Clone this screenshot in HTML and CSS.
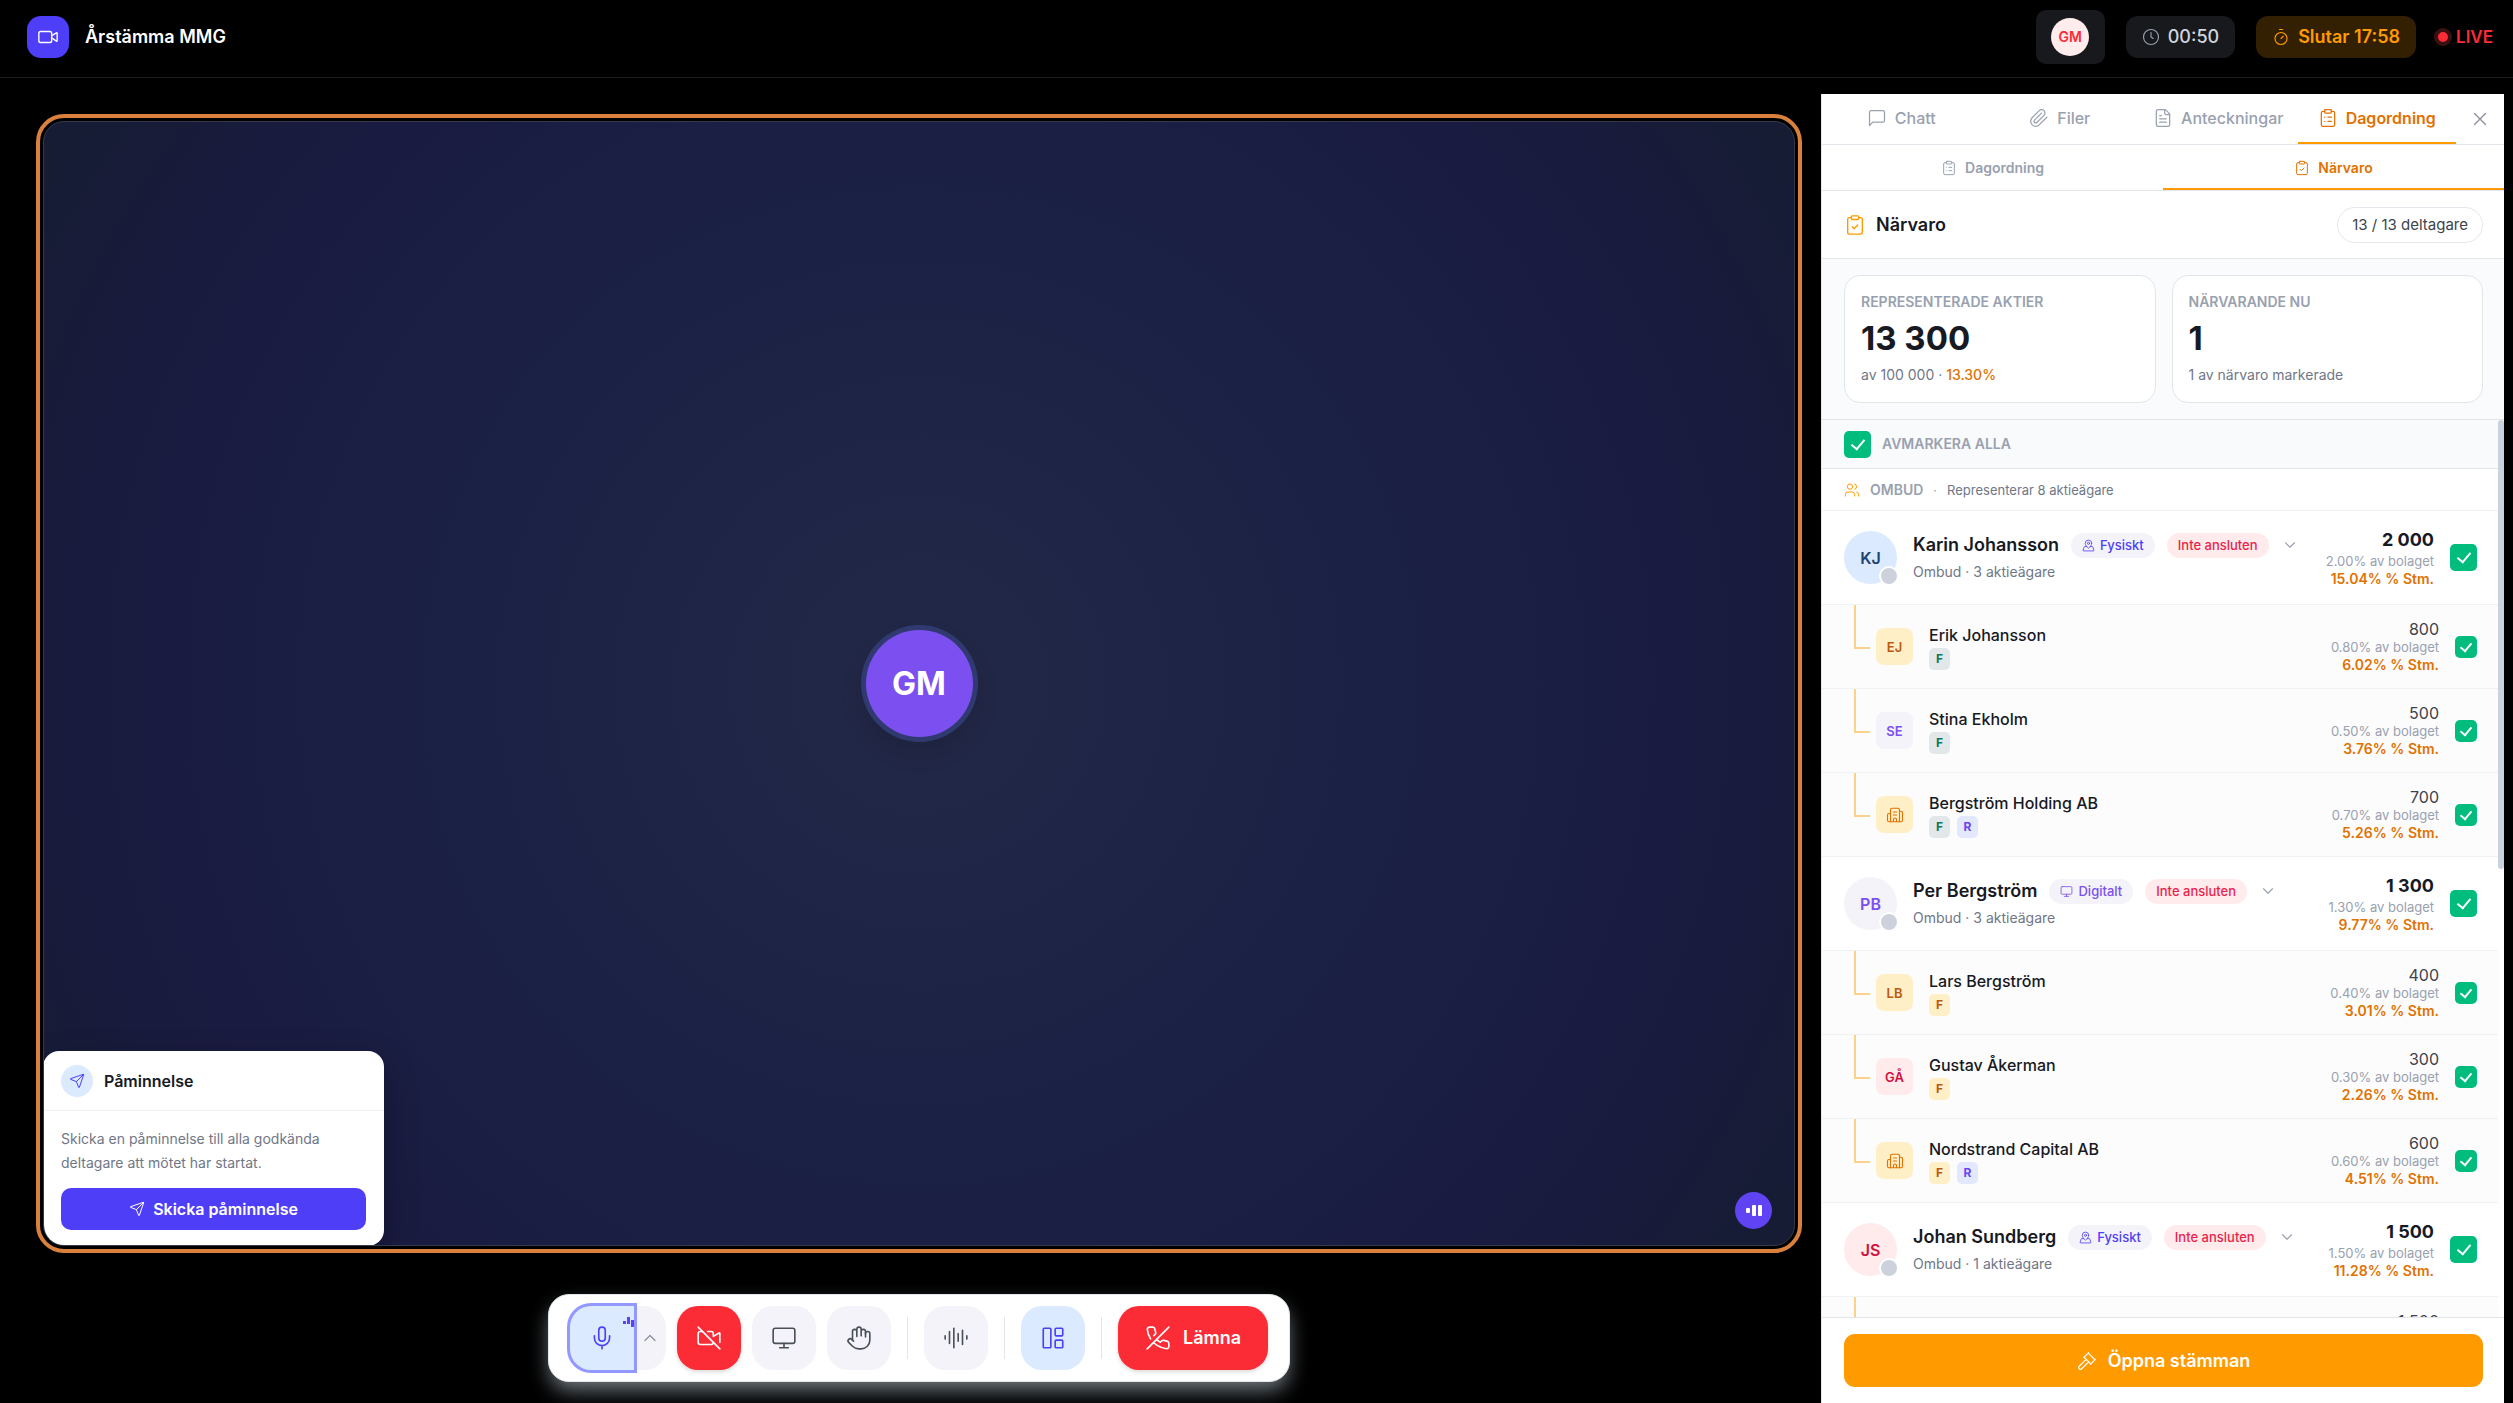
FILE: index.html
```html
<!DOCTYPE html>
<html lang="sv">
<head>
<meta charset="utf-8">
<meta name="viewport" content="width=device-width, initial-scale=1">
<title>Årstämma MMG</title>
<link rel="stylesheet" href="styles.css">
</head>
<body>
<svg class="sprite" aria-hidden="true">
  <symbol id="video" viewBox="0 0 24 24"><path d="m16 13 5.223 3.482a.5.5 0 0 0 .777-.416V7.87a.5.5 0 0 0-.752-.432L16 10.5"/><rect x="2" y="6" width="14" height="12" rx="2"/></symbol>
  <symbol id="video-off" viewBox="0 0 24 24"><path d="M10.66 6H14a2 2 0 0 1 2 2v2.5l5.248-3.062A.5.5 0 0 1 22 7.87v8.196"/><path d="M16 16a2 2 0 0 1-2 2H4a2 2 0 0 1-2-2V8a2 2 0 0 1 2-2h2"/><path d="m2 2 20 20"/></symbol>
  <symbol id="clock" viewBox="0 0 24 24"><circle cx="12" cy="12" r="10"/><path d="M12 6v6l3 2"/></symbol>
  <symbol id="timer" viewBox="0 0 24 24"><path d="M10 2h4M12 14l3-3"/><circle cx="12" cy="14" r="8"/></symbol>
  <symbol id="message" viewBox="0 0 24 24"><path d="M21 15a2 2 0 0 1-2 2H7l-4 4V5a2 2 0 0 1 2-2h14a2 2 0 0 1 2 2z"/></symbol>
  <symbol id="clip" viewBox="0 0 24 24"><path d="m21.44 11.05-9.19 9.19a6 6 0 0 1-8.49-8.49l8.57-8.57A4 4 0 1 1 18 8.84l-8.59 8.57a2 2 0 0 1-2.83-2.83l8.49-8.48"/></symbol>
  <symbol id="file" viewBox="0 0 24 24"><path d="M15 2H6a2 2 0 0 0-2 2v16a2 2 0 0 0 2 2h12a2 2 0 0 0 2-2V7Z"/><path d="M14 2v4a2 2 0 0 0 2 2h4M10 9H8M16 13H8M16 17H8"/></symbol>
  <symbol id="cliplist" viewBox="0 0 24 24"><rect x="8" y="2" width="8" height="4" rx="1"/><path d="M16 4h2a2 2 0 0 1 2 2v14a2 2 0 0 1-2 2H6a2 2 0 0 1-2-2V6a2 2 0 0 1 2-2h2M12 11h4M12 16h4M8 11h.01M8 16h.01"/></symbol>
  <symbol id="clipcheck" viewBox="0 0 24 24"><rect x="8" y="2" width="8" height="4" rx="1"/><path d="M16 4h2a2 2 0 0 1 2 2v14a2 2 0 0 1-2 2H6a2 2 0 0 1-2-2V6a2 2 0 0 1 2-2h2M9 14l2 2 4-4"/></symbol>
  <symbol id="close" viewBox="0 0 24 24"><path d="M18 6 6 18M6 6l12 12"/></symbol>
  <symbol id="users" viewBox="0 0 24 24"><path d="M16 21v-2a4 4 0 0 0-4-4H6a4 4 0 0 0-4 4v2M22 21v-2a4 4 0 0 0-3-3.87M16 3.13a4 4 0 0 1 0 7.75"/><circle cx="9" cy="7" r="4"/></symbol>
  <symbol id="onsite" viewBox="0 0 24 24"><path d="M18 8c0 3.613-3.869 7.429-5.393 8.795a1 1 0 0 1-1.214 0C9.870 15.429 6 11.613 6 8a6 6 0 0 1 12 0"/><circle cx="12" cy="8" r="2"/><path d="M8.714 14h-3.710a1 1 0 0 0-.948.683l-2.004 6A1 1 0 0 0 3 22h18a1 1 0 0 0 .948-1.316l-2-6a1 1 0 0 0-.949-.684h-3.712"/></symbol>
  <symbol id="monitor" viewBox="0 0 24 24"><rect x="2" y="3" width="20" height="14" rx="2"/><path d="M8 21h8M12 17v4"/></symbol>
  <symbol id="building" viewBox="0 0 24 24"><path d="M10 12h4M10 8h4M14 21v-3a2 2 0 0 0-4 0v3M6 10H4a2 2 0 0 0-2 2v7a2 2 0 0 0 2 2h16a2 2 0 0 0 2-2V9a2 2 0 0 0-2-2h-2"/><path d="M6 21V5a2 2 0 0 1 2-2h8a2 2 0 0 1 2 2v16"/></symbol>
  <symbol id="down" viewBox="0 0 24 24"><path d="m6 9 6 6 6-6"/></symbol>
  <symbol id="up" viewBox="0 0 24 24"><path d="m18 15-6-6-6 6"/></symbol>
  <symbol id="gavel" viewBox="0 0 24 24"><path d="m14 13-8.381 8.38a1 1 0 0 1-3.001-3l8.384-8.381M16 16l6-6M21.5 10.5l-8-8M8 8l6-6M8.5 7.5l8 8"/></symbol>
  <symbol id="send" viewBox="0 0 24 24"><path d="M14.536 21.686a.5.5 0 0 0 .937-.024l6.5-19a.496.496 0 0 0-.635-.635l-19 6.5a.5.5 0 0 0-.024.937l7.93 3.18a2 2 0 0 1 1.112 1.11zM21.854 2.147l-10.94 10.939"/></symbol>
  <symbol id="mic" viewBox="0 0 24 24"><path d="M12 2a3 3 0 0 0-3 3v7a3 3 0 0 0 6 0V5a3 3 0 0 0-3-3ZM19 10v2a7 7 0 0 1-14 0v-2M12 19v3"/></symbol>
  <symbol id="hand" viewBox="0 0 24 24"><path d="M18 11V6a2 2 0 0 0-4 0M14 10V4a2 2 0 0 0-4 0v2M10 10.500V6a2 2 0 0 0-4 0v8"/><path d="M18 8a2 2 0 1 1 4 0v6a8 8 0 0 1-8 8h-2c-2.800 0-4.500-.860-5.990-2.340l-3.600-3.600a2 2 0 0 1 2.830-2.820L7 15"/></symbol>
  <symbol id="audio" viewBox="0 0 24 24"><path d="M2 10v3M6 6v11M10 3v18M14 8v7M18 5v13M22 10v3"/></symbol>
  <symbol id="layout" viewBox="0 0 24 24"><rect x="3" y="3" width="7" height="18" rx="1"/><rect x="14" y="3" width="7" height="7" rx="1"/><rect x="14" y="14" width="7" height="7" rx="1"/></symbol>
  <symbol id="phone-off" viewBox="0 0 24 24"><path d="M10.680 13.310a16 16 0 0 0 3.410 2.600l1.270-1.270a2 2 0 0 1 2.110-.450 12.840 12.840 0 0 0 2.810.700 2 2 0 0 1 1.720 2v3a2 2 0 0 1-2.180 2 19.790 19.790 0 0 1-8.630-3.070 19.420 19.420 0 0 1-3.330-2.670m-2.670-3.340a19.790 19.790 0 0 1-3.070-8.630A2 2 0 0 1 4.110 2h3a2 2 0 0 1 2 1.720 12.840 12.840 0 0 0 .700 2.810 2 2 0 0 1-.450 2.110L8.090 9.910M22 2 2 22"/></symbol>
</svg>

<header class="topbar">
  <span class="logo"><svg class="icon i22"><use href="#video"/></svg></span>
  <h1 class="title">Årstämma MMG</h1>
  <div class="status">
    <button class="user" type="button" aria-label="Profil"><span class="user-dot">GM</span></button>
    <span class="chip"><svg class="icon i18"><use href="#clock"/></svg>00:50</span>
    <span class="chip chip-end"><svg class="icon i18"><use href="#timer"/></svg>Slutar 17:58</span>
    <span class="live"><i class="live-dot"></i>LIVE</span>
  </div>
</header>

<main class="meeting">
  <section class="stage" aria-label="Möte">
    <div class="frame">
      <div class="video">
        <div class="speaker">GM</div>
        <span class="level"><i></i><i></i><i></i></span>
        <div class="reminder">
          <div class="reminder-head"><span class="reminder-icon"><svg class="icon i16"><use href="#send"/></svg></span><h2>Påminnelse</h2></div>
          <div class="reminder-body">
            <p>Skicka en påminnelse till alla godkända deltagare att mötet har startat.</p>
            <button class="send" type="button"><svg class="icon i16"><use href="#send"/></svg>Skicka påminnelse</button>
          </div>
        </div>
      </div>
    </div>
    <div class="toolbar" role="toolbar" aria-label="Kontroller">
      <div class="mic-group">
        <button class="mic" type="button" aria-label="Mikrofon"><svg class="icon i26"><use href="#mic"/></svg><span class="mic-level"><i></i><i></i><i></i></span></button>
        <button class="mic-more" type="button" aria-label="Välj mikrofon"><svg class="icon i20"><use href="#up"/></svg></button>
      </div>
      <button class="tool tool-off" type="button" aria-label="Kamera"><svg class="icon i26"><use href="#video-off"/></svg></button>
      <button class="tool" type="button" aria-label="Dela skärm"><svg class="icon i26"><use href="#monitor"/></svg></button>
      <button class="tool" type="button" aria-label="Räck upp handen"><svg class="icon i26"><use href="#hand"/></svg></button>
      <span class="sep"></span>
      <button class="tool" type="button" aria-label="Ljud"><svg class="icon i26"><use href="#audio"/></svg></button>
      <span class="sep"></span>
      <button class="tool tool-on" type="button" aria-label="Layout"><svg class="icon i26"><use href="#layout"/></svg></button>
      <span class="sep"></span>
      <button class="leave" type="button"><svg class="icon i26"><use href="#phone-off"/></svg>Lämna</button>
    </div>
  </section>

  <aside class="panel">
    <div class="tabs">
      <button class="tab" type="button"><svg class="icon i20"><use href="#message"/></svg>Chatt</button>
      <button class="tab" type="button"><svg class="icon i20"><use href="#clip"/></svg>Filer</button>
      <button class="tab" type="button"><svg class="icon i20"><use href="#file"/></svg>Anteckningar</button>
      <button class="tab active" type="button"><svg class="icon i20"><use href="#cliplist"/></svg>Dagordning</button>
      <button class="tab-close" type="button" aria-label="Stäng"><svg class="icon i22"><use href="#close"/></svg></button>
    </div>
    <div class="tabs subtabs">
      <button class="tab" type="button"><svg class="icon i16"><use href="#cliplist"/></svg>Dagordning</button>
      <button class="tab active" type="button"><svg class="icon i16"><use href="#clipcheck"/></svg>Närvaro</button>
    </div>
    <div class="panel-head">
      <svg class="icon i22"><use href="#clipcheck"/></svg>
      <h2>Närvaro</h2>
      <span class="count">13 / 13 deltagare</span>
    </div>
    <div class="stats">
      <div class="stat"><h3>REPRESENTERADE AKTIER</h3><strong>13 300</strong><p>av 100 000 · <b>13.30%</b></p></div>
      <div class="stat"><h3>NÄRVARANDE NU</h3><strong>1</strong><p>1 av närvaro markerade</p></div>
    </div>
    <div class="list-wrap">
      <div class="list">
        <div class="mark-all"><input class="check" type="checkbox" id="all" checked><label for="all">AVMARKERA ALLA</label></div>
        <div class="group"><svg class="icon i16"><use href="#users"/></svg><b>OMBUD</b><i>·</i><span>Representerar 8 aktieägare</span></div>

        <div class="row">
          <span class="avatar blue">KJ<i></i></span>
          <div class="who"><div class="line"><label class="name" for="kj">Karin Johansson</label><span class="pill onsite"><svg class="icon i13"><use href="#onsite"/></svg>Fysiskt</span><span class="pill absent">Inte ansluten</span><svg class="icon i18 caret"><use href="#down"/></svg></div><p>Ombud · 3 aktieägare</p></div>
          <div class="shares"><b>2 000</b><span>2.00% av bolaget</span><em>15.04% % Stm.</em></div>
          <input class="check" type="checkbox" id="kj" checked>
        </div>
        <div class="row child">
          <span class="branch"></span><span class="avatar amber">EJ</span>
          <div class="who"><label class="name" for="ej">Erik Johansson</label><div class="tags"><span class="tag green">F</span></div></div>
          <div class="shares"><b>800</b><span>0.80% av bolaget</span><em>6.02% % Stm.</em></div>
          <input class="check" type="checkbox" id="ej" checked>
        </div>
        <div class="row child">
          <span class="branch"></span><span class="avatar violet">SE</span>
          <div class="who"><label class="name" for="se">Stina Ekholm</label><div class="tags"><span class="tag green">F</span></div></div>
          <div class="shares"><b>500</b><span>0.50% av bolaget</span><em>3.76% % Stm.</em></div>
          <input class="check" type="checkbox" id="se" checked>
        </div>
        <div class="row child">
          <span class="branch"></span><span class="avatar amber"><svg class="icon i18"><use href="#building"/></svg></span>
          <div class="who"><label class="name" for="bh">Bergström Holding AB</label><div class="tags"><span class="tag green">F</span><span class="tag rep">R</span></div></div>
          <div class="shares"><b>700</b><span>0.70% av bolaget</span><em>5.26% % Stm.</em></div>
          <input class="check" type="checkbox" id="bh" checked>
        </div>

        <div class="row">
          <span class="avatar violet">PB<i></i></span>
          <div class="who"><div class="line"><label class="name" for="pb">Per Bergström</label><span class="pill digital"><svg class="icon i13"><use href="#monitor"/></svg>Digitalt</span><span class="pill absent">Inte ansluten</span><svg class="icon i18 caret"><use href="#down"/></svg></div><p>Ombud · 3 aktieägare</p></div>
          <div class="shares"><b>1 300</b><span>1.30% av bolaget</span><em>9.77% % Stm.</em></div>
          <input class="check" type="checkbox" id="pb" checked>
        </div>
        <div class="row child">
          <span class="branch"></span><span class="avatar amber">LB</span>
          <div class="who"><label class="name" for="lb">Lars Bergström</label><div class="tags"><span class="tag gold">F</span></div></div>
          <div class="shares"><b>400</b><span>0.40% av bolaget</span><em>3.01% % Stm.</em></div>
          <input class="check" type="checkbox" id="lb" checked>
        </div>
        <div class="row child">
          <span class="branch"></span><span class="avatar rose">GÅ</span>
          <div class="who"><label class="name" for="ga">Gustav Åkerman</label><div class="tags"><span class="tag gold">F</span></div></div>
          <div class="shares"><b>300</b><span>0.30% av bolaget</span><em>2.26% % Stm.</em></div>
          <input class="check" type="checkbox" id="ga" checked>
        </div>
        <div class="row child">
          <span class="branch"></span><span class="avatar amber"><svg class="icon i18"><use href="#building"/></svg></span>
          <div class="who"><label class="name" for="nc">Nordstrand Capital AB</label><div class="tags"><span class="tag gold">F</span><span class="tag rep">R</span></div></div>
          <div class="shares"><b>600</b><span>0.60% av bolaget</span><em>4.51% % Stm.</em></div>
          <input class="check" type="checkbox" id="nc" checked>
        </div>

        <div class="row">
          <span class="avatar rose">JS<i></i></span>
          <div class="who"><div class="line"><label class="name" for="js">Johan Sundberg</label><span class="pill onsite"><svg class="icon i13"><use href="#onsite"/></svg>Fysiskt</span><span class="pill absent">Inte ansluten</span><svg class="icon i18 caret"><use href="#down"/></svg></div><p>Ombud · 1 aktieägare</p></div>
          <div class="shares"><b>1 500</b><span>1.50% av bolaget</span><em>11.28% % Stm.</em></div>
          <input class="check" type="checkbox" id="js" checked>
        </div>
        <div class="row child">
          <span class="branch"></span>
          <div class="shares"><b>1 500</b><span>1.50% av bolaget</span><em>11.28% % Stm.</em></div>
          <input class="check" type="checkbox" aria-label="Aktieägare" checked>
        </div>
      </div>
      <span class="thumb"></span>
    </div>
    <div class="panel-foot"><button class="open" type="button"><svg class="icon i20"><use href="#gavel"/></svg>Öppna stämman</button></div>
  </aside>
</main>
</body>
</html>
```
FILE: styles.css
```css
* { box-sizing: border-box; }
html, body { height: 100%; margin: 0; }
body {
  display: flex;
  flex-direction: column;
  background: #000;
  color: #171923;
  font-family: Inter, "Liberation Sans", sans-serif;
  font-size: 14px;
  line-height: 20px;
  overflow: hidden;
}
h1, h2, h3, p { margin: 0; }
button { font: inherit; border: 0; padding: 0; background: none; color: inherit; cursor: pointer; display: flex; align-items: center; justify-content: center; }
i, em { font-style: normal; }
.sprite { position: absolute; width: 0; height: 0; }
.icon { fill: none; stroke: currentColor; stroke-width: 1.5; stroke-linecap: round; stroke-linejoin: round; flex: none; }
.i13 { width: 13px; height: 13px; }
.i16 { width: 16px; height: 16px; }
.i18 { width: 18px; height: 18px; }
.i20 { width: 20px; height: 20px; }
.i22 { width: 22px; height: 22px; }
.i26 { width: 26px; height: 26px; }

/* Top bar */
.topbar { display: flex; align-items: center; height: 78px; padding: 0 20px 4px 27px; border-bottom: 1px solid #1c1c1e; flex: none; }
.logo { display: grid; place-items: center; width: 42px; height: 42px; border-radius: 14px; background: #4f3ef8; color: #fff; }
.title { margin-left: 16px; color: #fff; font-size: 18px; line-height: 24px; font-weight: 600; }
.status { display: flex; align-items: center; gap: 21px; margin-left: auto; }
.user { width: 69px; height: 54px; border-radius: 10px; background: #18191d; }
.user-dot { display: grid; place-items: center; width: 38px; height: 38px; border-radius: 50%; background: #ffecec; color: #fb2c36; font-size: 14px; font-weight: 600; }
.chip { display: flex; align-items: center; gap: 8px; height: 42px; padding: 0 16px; border-radius: 12px; background: #18191d; color: #d1d5dc; font-size: 18px; font-weight: 500; }
.chip .icon { color: #99a1af; }
.chip-end, .chip-end .icon { color: #ff9a00; }
.chip-end { background: #331f02; font-weight: 600; }
.live { display: flex; align-items: center; gap: 4px; margin-left: -3px; color: #fb2c36; font-size: 17px; font-weight: 600; }
.live-dot { width: 18px; height: 18px; border: 4px solid #3a1010; border-radius: 50%; background: #fb2c36; }

.meeting { display: flex; flex: 1; min-height: 0; padding-right: 9px; }

/* Stage */
.stage { display: flex; flex: 1; flex-direction: column; align-items: center; min-width: 0; padding: 36px 19px 21px 36px; }
.frame { display: flex; flex: 1; align-self: stretch; padding: 3px; border: 4px solid #d9803c; border-radius: 28px; }
.video { position: relative; display: grid; place-items: center; flex: 1; overflow: hidden; border: 1px solid #343a4c; border-radius: 21px; background: radial-gradient(circle at center, #222846 0%, #1b2145 45%, #191b40 75%, #161c33 100%); }
.speaker { display: grid; place-items: center; width: 107px; height: 107px; border-radius: 50%; background: #7c4ff0; box-shadow: 0 0 0 5px #313a70, 0 12px 24px 4px rgba(0, 0, 0, .12); color: #fff; font-size: 32px; font-weight: 700; }
.level { position: absolute; right: 22px; bottom: 16px; display: flex; align-items: center; justify-content: center; gap: 2px; width: 37px; height: 37px; border-radius: 50%; background: #6044f4; }
.level i { width: 4px; height: 11px; border-radius: 1px; background: #fff; }
.level i:first-child { height: 5px; }
.reminder { position: absolute; left: -1px; bottom: -1px; width: 341px; border-radius: 16px; background: #fff; box-shadow: 0 12px 32px rgba(0, 0, 0, .3); }
.reminder-head { display: flex; align-items: center; gap: 11px; height: 60px; padding: 0 18px; border-bottom: 1px solid #f0f1f6; }
.reminder-head h2 { font-size: 16px; font-weight: 600; }
.reminder-icon { display: grid; place-items: center; width: 32px; height: 32px; border-radius: 50%; background: #dbeafe; color: #4f3ef8; }
.reminder-body { padding: 16px 18px; }
.reminder-body p { margin-bottom: 13px; color: #6f7787; font-size: 14px; line-height: 24px; }
.send { gap: 8px; width: 100%; height: 42px; border-radius: 10px; background: #4f3ef8; color: #fff; font-size: 16px; font-weight: 600; }

.toolbar { display: flex; align-items: center; gap: 11px; height: 88px; margin-top: 41px; padding: 0 21px; border: 1px solid #e2e5ea; border-radius: 21px; background: #fff; box-shadow: 0 10px 20px -2px rgba(190, 204, 214, .6); }
.tool, .mic, .mic-more { height: 64px; background: #f3f3f9; color: #4a5058; }
.tool { width: 64px; border-radius: 21px; }
.tool-off, .leave { background: #fb2c36; color: #fff; box-shadow: 0 2px 4px rgba(0, 0, 0, .15); }
.tool-on { background: #dbeafe; color: #4f3ef8; }
.mic-group { display: flex; }
.mic { position: relative; width: 64px; border-radius: 21px 0 0 21px; background: #dbeafe; color: #4f3ef8; box-shadow: 0 0 0 3px #9298fd; overflow: hidden; }
.mic-more { width: 32px; border-radius: 0 21px 21px 0; color: #8b91a0; }
.mic-level { position: absolute; top: 8px; right: 0; display: flex; align-items: center; gap: 1px; height: 12px; }
.mic-level i { width: 3px; height: 7px; background: #5d42f5; }
.mic-level i:first-child { height: 3px; margin-top: 4px; }
.mic-level i:last-child { margin-top: 6px; }
.sep { width: 1px; height: 42px; margin: 0 5px; background: #e2e5ea; }
.leave { gap: 12px; height: 64px; padding: 0 27px; border-radius: 21px; font-size: 18px; font-weight: 600; }

/* Side panel */
.panel { display: flex; flex-direction: column; width: clamp(420px, 27.2vw, 683px); margin-top: 16px; border-left: 1px solid #e4e7ec; background: #fff; }
.tabs { display: flex; height: 51px; border-bottom: 1px solid #e2e6ea; flex: none; }
.tab { flex: 1 1 0; min-width: 0; gap: 8px; border-bottom: 2px solid transparent; color: #99a1af; font-size: 16px; font-weight: 500; }
.tab.active { border-color: #ff9a00; color: #e17100; font-weight: 600; }
.tab-close { width: 48px; color: #8b91a0; }
.subtabs { height: 46px; }
.subtabs .tab { padding-top: 2px; font-size: 14px; font-weight: 600; }
.panel-head { display: flex; align-items: center; gap: 10px; height: 68px; padding: 0 21px 0 22px; border-bottom: 1px solid #e2e6ea; flex: none; }
.panel-head .icon { color: #ff9a00; }
.panel-head h2 { font-size: 18px; font-weight: 600; }
.count { margin-left: auto; padding: 6px 14px; border: 1px solid #e4e7ec; border-radius: 18px; color: #3d434c; font-size: 15px; line-height: 22px; }
.stats { display: grid; grid-template-columns: 1fr 1fr; gap: 16px; padding: 16px 21px 16px 22px; border-bottom: 1px solid #e2e6ea; background: #fafbfd; flex: none; }
.stat { padding: 16px; border: 1px solid #e2e6ea; border-radius: 16px; background: #fff; }
.stat h3 { color: #99a1af; font-size: 14px; line-height: 20px; font-weight: 600; }
.stat strong { display: block; margin: 4px 0; font-size: 33px; line-height: 44px; font-weight: 700; }
.stat p { color: #6f7787; font-size: 14px; line-height: 22px; }
.stat p b { color: #e17100; font-weight: 500; }

.list-wrap { position: relative; flex: 1; min-height: 0; }
.list { height: 100%; padding-right: 6px; overflow-y: auto; scrollbar-width: none; }
.thumb { position: absolute; top: 0; right: 0; width: 6px; height: 50%; border-radius: 3px; background: #cbd2df; }
.mark-all { display: flex; align-items: center; gap: 11px; height: 49px; padding: 0 22px; border-bottom: 1px solid #e2e6ea; background: #f9fafc; color: #99a1af; font-size: 14px; font-weight: 600; }
.group { display: flex; align-items: center; gap: 10px; height: 42px; padding: 0 22px; border-bottom: 1px solid #f0f1f4; color: #99a1af; font-size: 13px; }
.group .icon { color: #ff9a00; }
.group b { font-size: 14px; font-weight: 600; }
.group span { color: #6f7787; }
.row { display: flex; align-items: center; height: 94px; padding: 0 21px 0 22px; border-bottom: 1px solid #f0f1f4; }
.avatar { position: relative; display: grid; place-items: center; width: 53px; height: 53px; border-radius: 50%; font-size: 16px; font-weight: 600; flex: none; }
.avatar i { position: absolute; right: -2px; bottom: -2px; width: 20px; height: 20px; border: 2px solid #fff; border-radius: 50%; background: #ccd1dc; }
.blue { background: #dbeafe; color: #1d4373; }
.amber { background: #feefc6; color: #bb5a12; }
.amber .icon { color: #e17100; }
.violet { background: #f3f3f9; color: #7c4ff0; }
.rose { background: #ffebeb; color: #cf1140; }
.who { margin-left: 16px; min-width: 0; }
.line { display: flex; align-items: center; gap: 12px; height: 26px; }
.name { font-size: 18px; font-weight: 600; white-space: nowrap; }
.who p { margin-top: 3px; color: #6f7787; font-size: 14px; line-height: 22px; }
.pill { display: flex; align-items: center; gap: 5px; height: 25px; padding: 0 11px; border-radius: 13px; background: #f3f3f9; font-size: 13px; font-weight: 500; white-space: nowrap; }
.onsite { color: #4f3ef8; }
.digital { color: #7c4ff0; }
.absent { background: #ffebeb; color: #ec1f4b; }
.caret { color: #99a1af; }
.shares { display: flex; flex-direction: column; margin-left: auto; text-align: right; white-space: nowrap; }
.shares b { font-size: 18px; line-height: 24px; font-weight: 700; }
.shares span { color: #99a1af; font-size: 13px; line-height: 18px; }
.shares em { color: #e17100; font-size: 14px; line-height: 18px; font-weight: 600; }
.check { position: relative; appearance: none; width: 27px; height: 27px; margin: 0 0 0 16px; border-radius: 5px; background: #00bc7d; flex: none; cursor: pointer; }
.mark-all .check { margin: 0; }
.check:not(:checked) { background: #fff; border: 1px solid #ccd1dc; }
.check:checked::after { content: ""; position: absolute; left: 50%; top: 46%; width: 6px; height: 11px; border: solid #fff; border-width: 0 2px 2px 0; transform: translate(-50%, -50%) rotate(40deg); }

.child { height: 84px; padding-left: 32px; background: #fcfcfd; }
.branch { align-self: flex-start; width: 16px; height: 44px; margin-right: 6px; border-left: 2px solid #fbd28a; border-bottom: 2px solid #fbd28a; }
.child .avatar { width: 37px; height: 37px; border-radius: 8px; font-size: 13px; }
.child .name { display: block; font-size: 16px; font-weight: 500; line-height: 22px; }
.child .shares b { color: #3d434c; font-size: 16px; line-height: 18px; font-weight: 400; }
.child .check { width: 22px; height: 22px; }
.child .check::after { width: 5px; height: 9px; }
.tags { display: flex; gap: 7px; margin-top: 2px; }
.tag { display: grid; place-items: center; width: 21px; height: 22px; border-radius: 5px; font-size: 12px; font-weight: 700; }
.green { background: #e2e8ea; color: #0d7a58; }
.gold { background: #feefc6; color: #bb5a12; }
.rep { background: #e3e8fd; color: #6b45f2; }

.panel-foot { padding: 16px 21px 16px 22px; border-top: 1px solid #e2e6ea; flex: none; }
.open { gap: 11px; width: 100%; height: 53px; border-radius: 11px; background: #ff9a00; color: #fff; font-size: 18px; font-weight: 600; }
```
